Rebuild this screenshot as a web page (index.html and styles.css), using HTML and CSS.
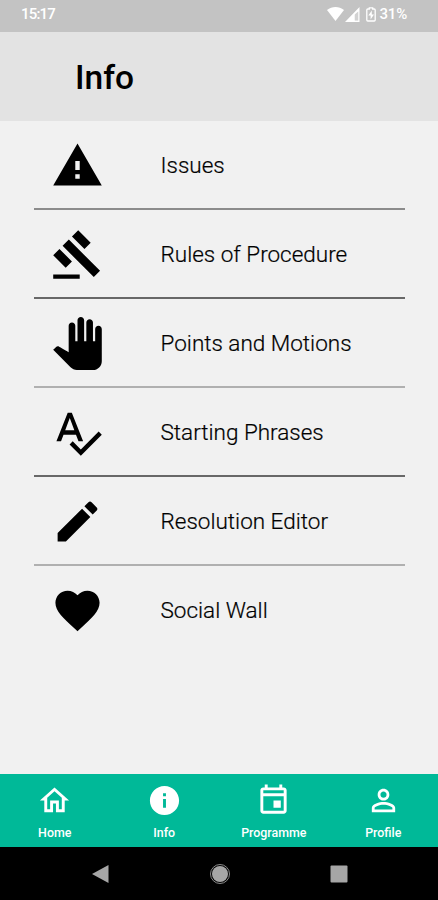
FILE: index.html
```html
<!DOCTYPE html>
<html lang="en">
<head>
<meta charset="utf-8">
<title>Info</title>
<link rel="stylesheet" href="styles.css">
</head>
<body>
<div class="statusbar">
  <span class="clock">15:17</span>
  <div class="status-icons">
    <svg class="wifi" viewBox="0 0 17 14"><path d="M0 3C5-1 12-1 17 3L8.500 14z"/></svg>
    <svg class="signal" viewBox="0 0 15 15"><path fill-rule="evenodd" d="M14.500 0v15H0zM13.200 4.500v9H9.800V7.500z"/><path opacity=".25" d="M9.800 7.500l3.400-3v9H9.800z"/></svg>
    <svg class="battery" viewBox="0 0 10 15"><path fill="none" stroke="#fff" stroke-width="1.300" d="M3.300 2V.8h3.400V2h1.500q1 0 1 1v10q0 1-1 1H1.800q-1 0-1-1V3q0-1 1-1z"/><path d="M5.800 3.600L2.300 8.600h2.300v4L8 7.400H5.800z"/></svg>
    <span class="percent">31%</span>
  </div>
</div>
<header class="header"><h1>Info</h1></header>
<main class="list">
  <div class="row line-mid"><svg viewBox="0 0 24 24"><path d="M1 21h22L12 2 1 21zm12-3h-2v-2h2v2zm0-4h-2v-4h2v4z"/></svg><span>Issues</span></div>
  <div class="row line-dark"><svg viewBox="0 0 24 24"><path d="M1 21h12v2H1zM5.245 8.070l2.830-2.827 14.140 14.142-2.828 2.828zM12.317 1l5.657 5.656-2.830 2.830-5.654-5.660zM3.825 9.485l5.657 5.657-2.828 2.828-5.657-5.657z"/></svg><span>Rules of Procedure</span></div>
  <div class="row line-light"><svg viewBox="0 0 24 24"><path d="M23 5.500V20c0 2.200-1.800 4-4 4h-7.300c-1.080 0-2.100-.43-2.850-1.190L1 14.830s1.260-1.230 1.300-1.250c.22-.19.49-.29.79-.29.22 0 .42.06.6.16.04.01 4.310 2.460 4.310 2.460V4c0-.83.67-1.500 1.500-1.500S11 3.170 11 4v7h1V1.500c0-.83.67-1.500 1.500-1.500S15 .67 15 1.500V11h1V2.500c0-.83.67-1.500 1.500-1.500s1.500.67 1.500 1.500V11h1V5.500c0-.83.67-1.500 1.500-1.500s1.500.67 1.500 1.500z"/></svg><span>Points and Motions</span></div>
  <div class="row line-dark"><svg viewBox="0 0 24 24"><path d="M12.450 16h2.090L9.430 3H7.570L2.460 16h2.090l1.120-3h5.640l1.140 3zm-6.020-5L8.500 5.480 10.570 11H6.430zm15.160.59l-8.090 8.090L9.830 16l-1.410 1.410 5.090 5.090L23 13l-1.410-1.410z"/></svg><span>Starting Phrases</span></div>
  <div class="row line-light"><svg viewBox="0 0 24 24"><path d="M3 17.250V21h3.750L17.810 9.940l-3.750-3.750L3 17.250zM20.710 7.040c.39-.39.39-1.020 0-1.410l-2.340-2.340c-.39-.39-1.020-.39-1.410 0l-1.830 1.830 3.750 3.750 1.830-1.830z"/></svg><span>Resolution Editor</span></div>
  <div class="row"><svg viewBox="0 0 24 24"><path d="M12 21.350l-1.450-1.320C5.400 15.360 2 12.280 2 8.500 2 5.420 4.420 3 7.500 3c1.740 0 3.410.81 4.500 2.090C13.090 3.810 14.760 3 16.500 3 19.580 3 22 5.420 22 8.500c0 3.780-3.400 6.860-8.550 11.540L12 21.350z"/></svg><span>Social Wall</span></div>
</main>
<nav class="tabs">
  <div class="tab"><svg viewBox="0 0 24 24"><path d="M12 5.690l5 4.500V18h-2v-6H9v6H7v-7.810l5-4.500M12 3L2 12h3v8h6v-6h2v6h6v-8h3L12 3z"/></svg><span>Home</span></div>
  <div class="tab"><svg viewBox="0 0 24 24"><path d="M12 2C6.480 2 2 6.480 2 12s4.480 10 10 10 10-4.480 10-10S17.520 2 12 2zm1 15h-2v-6h2v6zm0-8h-2V7h2v2z"/></svg><span>Info</span></div>
  <div class="tab"><svg viewBox="0 0 24 24"><path d="M19 3h-1V1h-2v2H8V1H6v2H5c-1.110 0-2 .9-2 2v14c0 1.100.89 2 2 2h14c1.100 0 2-.9 2-2V5c0-1.100-.9-2-2-2zm0 16H5V9h14v10zm0-12H5V5h14v2zM12 12h5v5h-5z"/></svg><span>Programme</span></div>
  <div class="tab"><svg viewBox="0 0 24 24"><path d="M12 5.900c1.160 0 2.100.94 2.100 2.100s-.94 2.100-2.100 2.100S9.900 9.160 9.900 8s.94-2.100 2.100-2.100m0 9c2.970 0 6.100 1.460 6.100 2.100v1.100H5.900V17c0-.64 3.130-2.100 6.100-2.100M12 4C9.790 4 8 5.790 8 8s1.790 4 4 4 4-1.790 4-4-1.790-4-4-4zm0 9c-2.670 0-8 1.340-8 4v3h16v-3c0-2.660-5.330-4-8-4z"/></svg><span>Profile</span></div>
</nav>
<div class="sysnav">
  <svg viewBox="0 0 20 20"><path d="M1 10L17.500 1v18z"/></svg>
  <svg viewBox="0 0 20 20"><circle cx="10" cy="10" r="8"/><circle cx="10" cy="10" r="9.500" fill="none" stroke="#8a8a8a"/></svg>
  <svg viewBox="0 0 20 20"><rect x="1.500" y="1.500" width="17" height="17" rx="1"/></svg>
</div>
</body>
</html>
```
FILE: styles.css
```css
* { box-sizing: border-box; }
body {
  margin: 0;
  height: 900px;
  display: flex;
  flex-direction: column;
  overflow: hidden;
  background: #f1f1f1;
  color: #000;
  font-family: Roboto, sans-serif;
}
svg { display: block; flex: none; fill: currentColor; }
.statusbar {
  height: 32px;
  flex: none;
  display: flex;
  justify-content: space-between;
  align-items: center;
  padding: 0 31px 4px 21px;
  background: #c3c3c3;
  color: #fff;
  font-size: 15px;
  font-weight: 500;
}
.clock { letter-spacing: -0.8px; }
.status-icons { display: flex; align-items: center; }
.wifi { width: 17px; height: 14px; }
.signal { width: 15px; height: 15px; margin-left: 1px; }
.battery { width: 10px; height: 15px; margin: 0 4px 0 6px; }
.percent { letter-spacing: -0.2px; }
.header {
  height: 89px;
  flex: none;
  display: flex;
  align-items: center;
  padding: 3px 0 0 75px;
  background: #e3e3e3;
}
.header h1 { margin: 0; font-size: 33.500px; font-weight: 500; line-height: 40px; }
.list { flex: 1; padding: 0 33px 0 34px; }
.row {
  height: 89px;
  display: flex;
  align-items: center;
  padding: 1px 0 0 17px;
  border-bottom: 2px solid transparent;
}
.row svg { width: 53px; height: 53px; }
.row span { margin-left: 56.500px; font-size: 22.500px; line-height: 28px; font-weight: 300; white-space: nowrap; -webkit-text-stroke: 0.200px #000; }
.line-dark { border-bottom-color: #686868; }
.line-mid { border-bottom-color: #8c8c8c; }
.line-light { border-bottom-color: #b0b0b0; }
.tabs {
  height: 73px;
  flex: none;
  display: grid;
  grid-template-columns: repeat(4, 1fr);
  background: #00b998;
  color: #fff;
}
.tab { display: flex; flex-direction: column; align-items: center; padding-top: 9px; }
.tab svg { width: 35px; height: 35px; }
.tab span { margin-top: 7px; font-size: 12.400px; line-height: 16px; font-weight: 500; }
.sysnav {
  height: 53px;
  flex: none;
  display: flex;
  justify-content: center;
  gap: 99px;
  padding: 17px 0 0 1px;
  background: #000;
  color: #a6a6a6;
}
.sysnav svg { width: 20px; height: 20px; }
```
